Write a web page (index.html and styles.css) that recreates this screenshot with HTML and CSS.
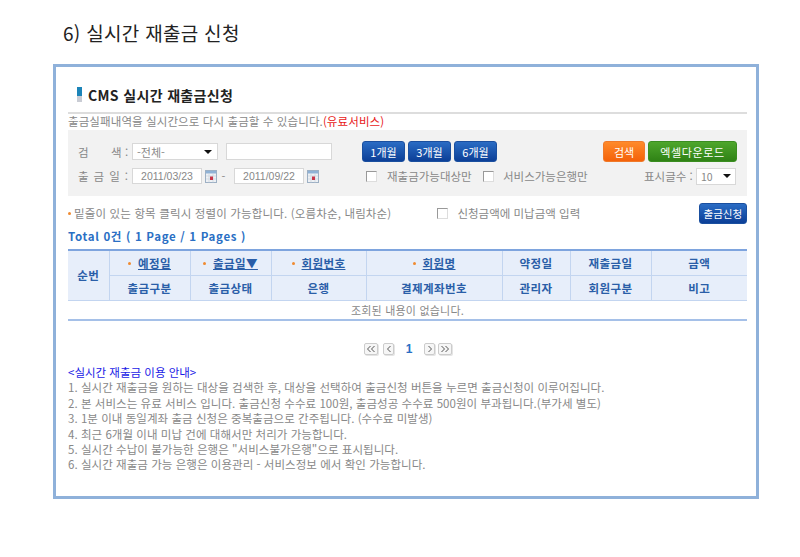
FILE: index.html
```html
<!DOCTYPE html>
<html lang="ko">
<head>
<meta charset="utf-8">
<title>실시간 재출금 신청</title>
<link rel="stylesheet" href="styles.css">
</head>
<body>
<h1 class="doc-title">6) 실시간 재출금 신청</h1>
<main class="frame">
  <h2 class="page-title"><span class="title-mark"></span>CMS 실시간 재출금신청</h2>
  <p class="lead">출금실패내역을 실시간으로 다시 출금할 수 있습니다.<span class="red">(유료서비스)</span></p>
  <section class="panel">
    <div class="panel-row row-a">
      <span class="label">검 &nbsp; &nbsp; &nbsp; 색 :</span>
      <span class="select sel-main">-전체-<i class="caret"></i></span>
      <span class="input in-search"></span>
      <span class="btn blue b-month first">1개월</span>
      <span class="btn blue b-month">3개월</span>
      <span class="btn blue b-month">6개월</span>
      <span class="btn orange b-search">검색</span>
      <span class="btn green b-excel">엑셀다운로드</span>
    </div>
    <div class="panel-row row-b">
      <span class="label label-date">출 금 일 :</span>
      <span class="input in-date">2011/03/23</span>
      <svg class="cal" viewBox="0 0 12 13"><rect x=".5" y=".5" width="11" height="12" fill="#eef1f5" stroke="#9db0c4"/><rect x="1" y="1" width="10" height="2.5" fill="#8fb2d6"/><path d="M1 6h10M1 9h10M4 3.5v9M8 3.5v9" stroke="#c9d3de" stroke-width=".7"/><rect x="5" y="6.5" width="3" height="3.5" fill="#c8374a"/></svg>
      <span class="dash">-</span>
      <span class="input in-date">2011/09/22</span>
      <svg class="cal" viewBox="0 0 12 13"><rect x=".5" y=".5" width="11" height="12" fill="#eef1f5" stroke="#9db0c4"/><rect x="1" y="1" width="10" height="2.5" fill="#8fb2d6"/><path d="M1 6h10M1 9h10M4 3.5v9M8 3.5v9" stroke="#c9d3de" stroke-width=".7"/><rect x="5" y="6.5" width="3" height="3.5" fill="#c8374a"/></svg>
      <span class="check c1"></span><span class="check-text t1">재출금가능대상만</span>
      <span class="check c2"></span><span class="check-text t2">서비스가능은행만</span>
      <span class="count-label">표시글수 :</span>
      <span class="select sel-count">10<i class="caret"></i></span>
    </div>
  </section>
  <div class="hint-row">
    <span class="dot"></span><span class="hint">밑줄이 있는 항목 클릭시 정렬이 가능합니다. (오름차순, 내림차순)</span>
    <span class="check c3"></span><span class="check-text t3">신청금액에 미납금액 입력</span>
    <span class="btn blue b-apply">출금신청</span>
  </div>
  <p class="total">Total 0건 ( 1 Page / 1 Pages )</p>
  <table class="grid">
    <colgroup>
      <col class="w1"><col class="w2"><col class="w3"><col class="w4"><col class="w5"><col class="w6"><col class="w7"><col class="w8">
    </colgroup>
    <thead>
      <tr>
        <th rowspan="2">순번</th>
        <th><span class="dot th-dot"></span><a>예정일</a></th>
        <th><span class="dot th-dot"></span><a>출금일▼</a></th>
        <th><span class="dot th-dot"></span><a>회원번호</a></th>
        <th><span class="dot th-dot"></span><a>회원명</a></th>
        <th>약정일</th>
        <th>재출금일</th>
        <th>금액</th>
      </tr>
      <tr>
        <th>출금구분</th><th>출금상태</th><th>은행</th><th>결제계좌번호</th><th>관리자</th><th>회원구분</th><th>비고</th>
      </tr>
    </thead>
    <tbody>
      <tr><td colspan="8">조회된 내용이 없습니다.</td></tr>
    </tbody>
  </table>
  <nav class="pager">
    <span class="pg pg-wide"><svg viewBox="0 0 10 8"><path d="M4.5 1 1.5 4l3 3M8.5 1l-3 3 3 3" fill="none" stroke="#555" stroke-width="1"/></svg></span>
    <span class="pg pg-narrow"><svg viewBox="0 0 6 8"><path d="M4.5 1 1.5 4l3 3" fill="none" stroke="#555" stroke-width="1"/></svg></span>
    <b class="pg-num">1</b>
    <span class="pg pg-narrow"><svg viewBox="0 0 6 8"><path d="m1.5 1 3 3-3 3" fill="none" stroke="#555" stroke-width="1"/></svg></span>
    <span class="pg pg-wide pg-last"><svg viewBox="0 0 10 8"><path d="m1.5 1 3 3-3 3M5.500 1l3 3-3 3" fill="none" stroke="#555" stroke-width="1"/></svg></span>
  </nav>
  <section class="notes">
    <h3 class="notes-title">&lt;실시간 재출금 이용 안내&gt;</h3>
    <p>1. 실시간 재출금을 원하는 대상을 검색한 후, 대상을 선택하여 출금신청 버튼을 누르면 출금신청이 이루어집니다.</p>
    <p>2. 본 서비스는 유료 서비스 입니다. 출금신청 수수료 100원, 출금성공 수수료 500원이 부과됩니다.(부가세 별도)</p>
    <p>3. 1분 이내 동일계좌 출금 신청은 중복출금으로 간주됩니다. (수수료 미발생)</p>
    <p>4. 최근 6개월 이내 미납 건에 대해서만 처리가 가능합니다.</p>
    <p>5. 실시간 수납이 불가능한 은행은 "서비스불가은행"으로 표시됩니다.</p>
    <p>6. 실시간 재출금 가능 은행은 이용관리 - 서비스정보 에서 확인 가능합니다.</p>
  </section>
</main>
</body>
</html>
```
FILE: styles.css
```css
* { box-sizing: border-box; }
html, body { margin: 0; padding: 0; }
body {
  width: 800px; height: 557px; background: #fff; overflow: hidden;
  font-family: "Noto Sans CJK KR", "Noto Sans", sans-serif;
  font-size: 11px; color: #888;
}
p, h1, h2, h3 { margin: 0; }
.doc-title {
  height: 64px; padding: 20px 0 0 63px;
  font-size: 19px; font-weight: 400; line-height: 25px; color: #222; letter-spacing: .3px;
}
.frame {
  margin-left: 53px; width: 706px; height: 435px;
  border: 3px solid #8fb1da; padding: 0 9px 0 12px;
}
.page-title {
  height: 47px; padding: 10px 0 0 9px; display: flex; align-items: center;
  font-size: 14px; font-weight: 700; color: #222; line-height: 18px; letter-spacing: .35px;
  border-bottom: 2px solid #ddd;
}
.title-mark {
  width: 5px; height: 15px; margin-right: 6px;
  background: linear-gradient(#1c84b8 0 9px, #c9ccd4 9px);
}
.lead { height: 16px; line-height: 15px; font-size: 11.5px; color: #888; letter-spacing: .1px; }
.red { color: #e81818; }
.panel { height: 66px; background: #f2f2f2; padding: 11px 0 0 10px; }
.panel-row { display: flex; align-items: center; }
.row-a { height: 21px; }
.row-b { height: 18px; margin-top: 5px; }
.label { width: 54px; font-size: 11.5px; color: #888; white-space: pre; }
.label-date { letter-spacing: .9px; }
.select, .input {
  display: flex; align-items: center; height: 17px; background: #fff;
  border: 1px solid #d8d8d8; font-size: 11px; color: #888;
}
.sel-main { width: 86px; padding-left: 4px; justify-content: space-between; padding-right: 5px; }
.caret { width: 0; height: 0; border: 4px solid transparent; border-top: 4px solid #111; border-bottom: 0; }
.in-search { width: 106px; margin-left: 8px; }
.in-date { width: 70px; justify-content: center; font-family: "Liberation Sans", sans-serif; font-size: 10.5px; height: 16px; }
.btn {
  display: flex; align-items: center; justify-content: center; height: 21px;
  border-radius: 3px; color: #fff; font-size: 11px;
}
.blue { background: linear-gradient(#2a6cc4, #0c3f97); border: 1px solid #1a4f9f; }
.orange { background: linear-gradient(#ff8a2a, #f4620a); border: 1px solid #ef7a2a; }
.green { background: linear-gradient(#4ea62c, #2f8215); border: 1px solid #3a8d20; }
.b-month { width: 43px; margin-left: 3px; }
.first { margin-left: 30px; }
.b-search { width: 42px; margin-left: 106px; }
.b-excel { width: 89px; margin-left: 3px; letter-spacing: .6px; }
.cal { width: 12px; height: 13px; margin-left: 3px; }
.dash { width: 17px; text-align: center; font-size: 11px; padding-right: 4px; }
.check { width: 11px; height: 11px; background: #fff; border: 1px solid #999; border-right-color: #ddd; border-bottom-color: #ddd; flex: none; }
.check-text { font-size: 11.5px; color: #888; white-space: nowrap; }
.c1 { margin-left: 47px; }
.t1 { width: 96px; margin-left: 10px; }
.t2 { width: 141px; margin-left: 9px; }
.count-label { width: 52px; font-size: 11.5px; white-space: nowrap; }
.sel-count { width: 40px; padding: 0 4px; justify-content: space-between; font-size: 10.5px; }
.hint-row { height: 22px; margin-top: 6px; display: flex; align-items: center; }
.dot { display: inline-block; width: 3px; height: 3px; border-radius: 50%; background: #f08a30; flex: none; }
.hint { width: 369px; margin-left: 3px; font-size: 11.5px; letter-spacing: .15px; color: #888; white-space: nowrap; }
.t3 { width: 245px; margin-left: 9px; }
.b-apply { width: 49px; font-size: 10.5px; }
.total { height: 17px; margin-top: 4px; line-height: 16px; font-size: 11.5px; font-weight: 700; color: #2a6fc4; letter-spacing: .68px; }
.grid {
  border-collapse: collapse; table-layout: fixed; width: 679px; margin-top: 4px;
  border-top: 2px solid #7ea4de; border-bottom: 2px solid #a5c0e8;
}
.w1 { width: 41px; } .w2 { width: 81px; } .w3 { width: 81px; } .w4 { width: 95px; }
.w5 { width: 136px; } .w6 { width: 68px; } .w7 { width: 81px; } .w8 { width: 96px; }
.grid th {
  height: 25px; padding: 0; background: #e7eefa; border: 1px solid #c3d5f0;
  border-top: 0; font-size: 11.5px; font-weight: 700; color: #2a5ea8; text-align: center; letter-spacing: .4px;
}
.grid th:first-child { border-left: 0; }
.grid th:last-child { border-right: 0; }
.grid a { color: #2a5ea8; text-decoration: underline; }
.th-dot { margin: 0 7px 2px 0; vertical-align: middle; }
.grid td { height: 20px; padding: 0; text-align: center; font-size: 11px; letter-spacing: .2px; color: #888; }
.pager { display: flex; justify-content: flex-start; align-items: center; height: 14px; margin-top: 21px; padding-left: 296px; }
.pg {
  height: 12px; display: flex; align-items: center; justify-content: center;
  border: 1px solid #ccc; border-radius: 2px; background: #f6f6f6;
  box-shadow: 1px 1px 0 #e4e4e4;
}
.pg svg { height: 8px; }
.pg-wide { width: 14px; margin-right: 5px; }
.pg-narrow { width: 11px; }
.pg-last { margin: 0 0 0 3px; }
.pg-num { width: 30px; text-align: center; color: #2a6fc4; font-size: 12px; font-family: "Liberation Sans", sans-serif; }
.notes { margin-top: 9px; }
.notes-title { font-size: 11.5px; font-weight: 400; color: #1a1ae6; line-height: 15.4px; }
.notes p { font-size: 11.5px; line-height: 15.4px; letter-spacing: .04px; color: #888; white-space: nowrap; }
```
